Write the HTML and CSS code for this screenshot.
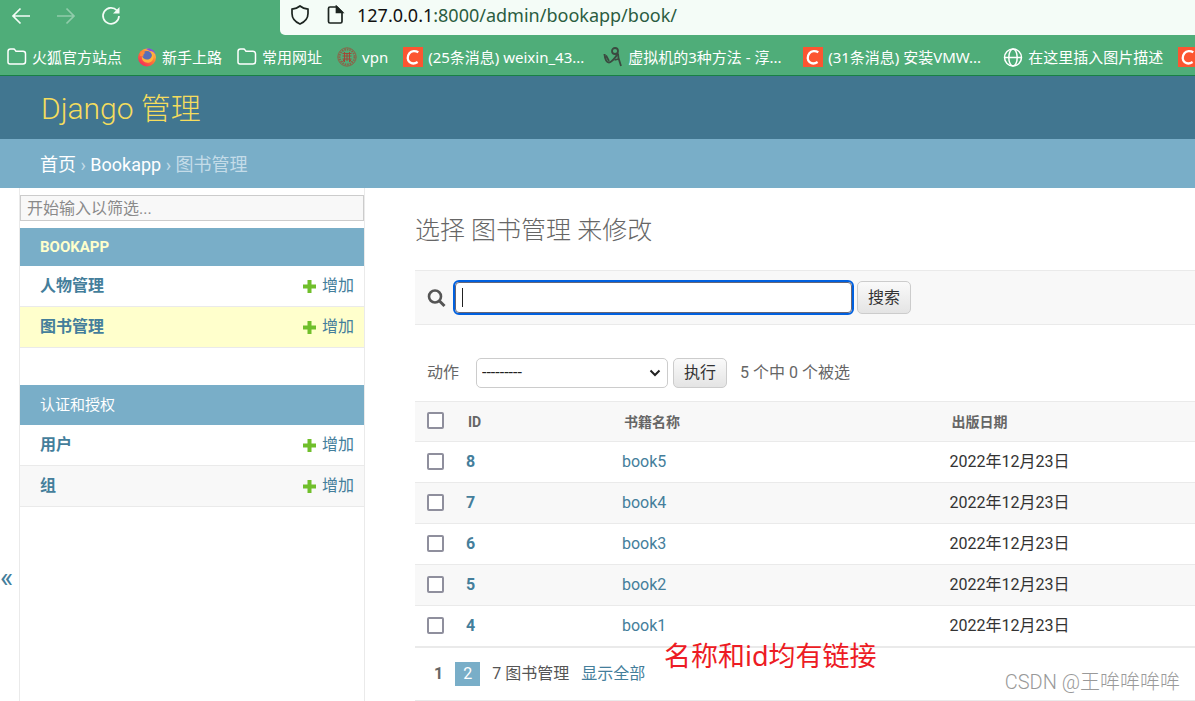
FILE: index.html
```html
<!DOCTYPE html>
<html lang="zh-CN">
<head>
<meta charset="utf-8">
<title>选择 图书管理 来修改 | Django 管理</title>
<link rel="stylesheet" href="styles.css">
</head>
<body>
<svg class="defs" width="0" height="0" aria-hidden="true">
  <symbol id="folder" viewBox="0 0 20 20"><path d="M1 15.500V4.500Q1 2 3.500 2H6.500Q7.500 2 8 2.800L9 4.300H16Q18.500 4.300 18.500 6.800V14.500Q18.500 17 16 17H3Q1 17 1 15Z" fill="none" stroke="currentColor" stroke-width="1.500"/></symbol>
  <symbol id="csdn" viewBox="0 0 20 20"><path d="M0 0H20V20H0Z" fill="#fc5531"/><path d="M15.300 5.300C12.500 3.600 8.500 3.600 6.400 6.200C3.900 9.300 4.300 13.500 6.700 15.200C8.900 16.900 12.300 16.500 14.600 15" fill="none" stroke="#fff" stroke-width="2.300"/></symbol>
  <symbol id="plus" viewBox="0 0 13 13"><path d="M4.500 0H8.500V4.500H13V8.500H8.500V13H4.500V8.500H0V4.500H4.500Z" fill="#70bf2b"/></symbol>
</svg>

<nav class="toolbar" aria-label="浏览器工具栏">
  <div class="toolbar-buttons">
    <button type="button" class="tool" aria-label="后退"><svg width="20" height="20" viewBox="0 0 20 20"><path d="M19 10H2M9.500 2.500L2 10L9.500 17.500"/></svg></button>
    <button type="button" class="tool" aria-label="前进" disabled><svg width="20" height="20" viewBox="0 0 20 20"><path d="M1 10H18M10.500 2.500L18 10L10.500 17.500"/></svg></button>
    <button type="button" class="tool" aria-label="刷新"><svg width="20" height="20" viewBox="0 0 20 20"><path d="M16 4.500A8 8 0 1 0 18 10"/><path d="M18.500 1V7.500H12Z" fill="currentColor" stroke="none"/></svg></button>
  </div>
  <div class="address">
    <svg width="20" height="20" viewBox="0 0 20 20"><path d="M10 1Q13 3.500 18 4.200V8.500Q18 15.500 10 19Q2 15.500 2 8.500V4.200Q7 3.500 10 1Z"/></svg>
    <svg width="20" height="20" viewBox="0 0 20 20"><path d="M5 2H12L17 7V16.500Q17 18 15.500 18H5Q3.500 18 3.500 16.500V3.500Q3.500 2 5 2Z"/><path d="M11.500 1.500L17.500 7.500H11.500Z" fill="currentColor"/></svg>
    <span class="url"><span class="host">127.0.0.1</span>:8000/admin/bookapp/book/</span>
  </div>
</nav>

<nav class="bookmarks" aria-label="书签">
  <a href="#"><svg width="20" height="20"><use href="#folder"/></svg><span>火狐官方站点</span></a>
  <a href="#"><svg width="20" height="20" viewBox="0 0 20 20"><defs><linearGradient id="fox" x1="1" y1="0" x2="0.200" y2="1"><stop offset="0" stop-color="#ffe14c"/><stop offset="0.500" stop-color="#ff7b35"/><stop offset="1" stop-color="#f5245d"/></linearGradient></defs><circle cx="10" cy="10.500" r="9" fill="url(#fox)"/><path d="M9 2C13 0.500 18 3 18.500 8C17 5 15.500 4 13 4Z" fill="#8a4be0"/><circle cx="10" cy="9" r="5" fill="#5a6fb8"/><path d="M5 9C6 13 12 14 14.500 10C15.500 8 15 6 13.500 4.500C18 7 17.500 14 12.500 15.500C7.500 16.500 4 13 5 9Z" fill="#ffb43d"/><path d="M3.500 5C5 4 7 4.500 8.500 6C6.500 6.500 6 8 6.500 9.500L3 9Z" fill="#ff8a3a"/></svg><span>新手上路</span></a>
  <a href="#"><svg width="20" height="20"><use href="#folder"/></svg><span>常用网址</span></a>
  <a href="#"><svg width="20" height="20" viewBox="0 0 20 20" fill="none" stroke="#8c6248"><circle cx="10" cy="10" r="9.200"/><circle cx="10" cy="10" r="7.500" stroke-width="2" stroke-dasharray="1.500 1"/><path d="M5.500 6.500H14.500M5.500 9H14.500M5.500 12H14.500M7.500 5V15M12.500 5V15M10 6V14M7.500 12L5.500 15M12.500 12L14.500 15" stroke="#a34736"/></svg><span>vpn</span></a>
  <a href="#"><svg width="20" height="20"><use href="#csdn"/></svg><span class="long">(25条消息) weixin_43...</span></a>
  <a href="#"><svg width="20" height="20" viewBox="0 0 20 20" fill="none" stroke="#3b4a40"><circle cx="12" cy="4" r="3" stroke-width="1.800"/><path d="M1.500 7C2 12 3.500 15.500 6 15.500C9 15.500 12 11 15 6.500" stroke-width="2"/><path d="M3 8.500L6 14M15 6.500L15.500 11L18 19M15.500 12L11.500 13" stroke-width="1.800"/></svg><span class="long">虚拟机的3种方法 - 淳...</span></a>
  <a href="#"><svg width="20" height="20"><use href="#csdn"/></svg><span class="long">(31条消息) 安装VMW...</span></a>
  <a href="#"><svg width="20" height="20" viewBox="0 0 20 20" fill="none" stroke="currentColor" stroke-width="1.500"><circle cx="10" cy="10.500" r="8.500"/><ellipse cx="10" cy="10.500" rx="4.200" ry="8.500"/><path d="M1.500 10.500H18.500"/></svg><span>在这里插入图片描述</span></a>
  <a href="#" aria-label="CSDN"><svg width="20" height="20"><use href="#csdn"/></svg></a>
</nav>

<header class="header"><a href="#">Django 管理</a></header>
<nav class="breadcrumbs" aria-label="路径"><a href="#">首页</a> › <a href="#">Bookapp</a> › 图书管理</nav>

<div class="main">
  <button type="button" class="toggle" aria-label="切换导航">«</button>
  <aside class="sidebar">
    <input class="filter" type="text" placeholder="开始输入以筛选..." aria-label="筛选导航项目">
    <section class="app">
      <h2 class="caption current"><a href="#">BOOKAPP</a></h2>
      <div class="model"><a class="name" href="#">人物管理</a><a class="add" href="#"><svg width="13" height="13"><use href="#plus"/></svg>增加</a></div>
      <div class="model selected"><a class="name" href="#">图书管理</a><a class="add" href="#"><svg width="13" height="13"><use href="#plus"/></svg>增加</a></div>
    </section>
    <section class="app">
      <h2 class="caption"><a href="#">认证和授权</a></h2>
      <div class="model"><a class="name" href="#">用户</a><a class="add" href="#"><svg width="13" height="13"><use href="#plus"/></svg>增加</a></div>
      <div class="model even"><a class="name" href="#">组</a><a class="add" href="#"><svg width="13" height="13"><use href="#plus"/></svg>增加</a></div>
    </section>
  </aside>

  <main class="content">
    <h1>选择 图书管理 来修改</h1>
    <form class="search">
      <label for="searchbar" aria-label="搜索"><svg width="20" height="20" viewBox="0 0 20 20" fill="none" stroke="#555"><circle cx="8" cy="8.500" r="6" stroke-width="2.600"/><path d="M12.500 13L17.500 18" stroke-width="3"/></svg></label>
      <input id="searchbar" type="text">
      <button type="submit" class="btn">搜索</button>
    </form>
    <form class="actions">
      <label for="action">动作</label>
      <span class="select-wrap">
        <select id="action"><option>---------</option><option>删除所选的 图书管理</option></select>
        <svg width="12" height="8" viewBox="0 0 12 8"><path d="M1.500 1.500L6 6L10.500 1.500" fill="none" stroke="#222" stroke-width="2"/></svg>
      </span>
      <button type="submit" class="btn">执行</button>
      <span class="counter">5 个中 0 个被选</span>
    </form>
    <table class="results">
      <thead>
        <tr><th class="col-check"><input type="checkbox" aria-label="全选"></th><th class="col-id">ID</th><th class="col-name">书籍名称</th><th>出版日期</th></tr>
      </thead>
      <tbody>
        <tr><td><input type="checkbox" aria-label="选择 8"></td><td><a class="id" href="#">8</a></td><td><a href="#">book5</a></td><td>2022年12月23日</td></tr>
        <tr><td><input type="checkbox" aria-label="选择 7"></td><td><a class="id" href="#">7</a></td><td><a href="#">book4</a></td><td>2022年12月23日</td></tr>
        <tr><td><input type="checkbox" aria-label="选择 6"></td><td><a class="id" href="#">6</a></td><td><a href="#">book3</a></td><td>2022年12月23日</td></tr>
        <tr><td><input type="checkbox" aria-label="选择 5"></td><td><a class="id" href="#">5</a></td><td><a href="#">book2</a></td><td>2022年12月23日</td></tr>
        <tr><td><input type="checkbox" aria-label="选择 4"></td><td><a class="id" href="#">4</a></td><td><a href="#">book1</a></td><td>2022年12月23日</td></tr>
      </tbody>
    </table>
    <div class="paginator">
      <span class="page">1</span><a class="page-link" href="#">2</a><span class="total">7 图书管理</span><a href="#">显示全部</a>
    </div>
    <p class="note">名称和id均有链接</p>
    <p class="watermark">CSDN @王哞哞哞哞</p>
  </main>
</div>
</body>
</html>
```
FILE: styles.css
```css
* { box-sizing: border-box; }

body {
  margin: 0;
  min-height: 100vh;
  display: flex;
  flex-direction: column;
  overflow-x: hidden;
  background: #fff;
  color: #333;
  font: 16px/20px Roboto, "Noto Sans CJK SC", sans-serif;
}

a { color: #447e9b; text-decoration: none; }
svg { flex: none; display: block; }
.defs { position: absolute; }
button, input, select { font: inherit; }

/* Browser chrome */
.toolbar {
  display: flex;
  height: 35px;
  background: #4fad79;
}
.toolbar-buttons {
  flex: none;
  display: flex;
  gap: 25px;
  width: 280px;
  padding: 6px 11px;
}
.tool {
  width: 20px;
  height: 20px;
  padding: 0;
  border: 0;
  background: none;
  color: #f3fcf6;
}
.tool svg { fill: none; stroke: currentColor; stroke-width: 1.7; }
.tool:disabled { opacity: 0.4; }
.address {
  flex: 1;
  display: flex;
  align-items: center;
  gap: 15px;
  padding: 0 10px 5px;
  border-bottom-left-radius: 5px;
  background: #f4fcf7;
  color: #1c2420;
}
.address svg { fill: none; stroke: currentColor; stroke-width: 1.7; }
.url {
  margin-left: -3px;
  color: #2b5c41;
  font: 18px/24px "Noto Sans", "Noto Sans CJK SC", sans-serif;
}
.host { color: #111; }
.bookmarks {
  display: flex;
  align-items: center;
  gap: 15px;
  height: 41px;
  padding: 4px 7px 0;
  overflow: hidden;
  border-bottom: 1px solid #188045;
  background: #4fad79;
  font: 15px/20px "Noto Sans", "Noto Sans CJK SC", sans-serif;
}
.bookmarks a {
  flex: none;
  display: flex;
  gap: 5px;
  color: #fff;
  white-space: nowrap;
}
.long { min-width: 160px; }

/* Site header */
.header {
  padding: 15px 41px 12px;
  background: #417690;
  font-size: 30px;
  line-height: 36px;
  font-weight: 300;
}
.header a { color: #f5dd5d; }
.breadcrumbs {
  padding: 14px 40px 11px;
  background: #79aec8;
  color: #c4dce8;
  font-size: 18px;
  line-height: 24px;
}
.breadcrumbs a { color: #fff; }

/* Navigation */
.main { flex: 1; display: flex; }
.toggle {
  flex: none;
  width: 19px;
  padding: 376px 0 0;
  display: flex;
  align-items: flex-start;
  border: 0;
  background: none;
  color: #447e9b;
  font-size: 28px;
  line-height: 1;
}
.sidebar {
  flex: none;
  width: 346px;
  padding-top: 7px;
  border: solid #eaeaea;
  border-width: 0 1px;
}
.filter {
  display: block;
  width: 100%;
  height: 26px;
  margin-bottom: 7px;
  padding: 0 6px;
  border: 1px solid #ccc;
  background: #f8f8f8;
}
.filter::placeholder { color: #8a8a8a; }
.app { margin-bottom: 37px; }
.caption {
  margin: 0;
  padding: 10px 20px;
  background: #79aec8;
  font-size: 15px;
  line-height: 20px;
  font-weight: 400;
}
.caption a { color: #fff; }
.current { font-weight: 700; line-height: 18px; }
.current a { color: #ffc; }
.model {
  display: flex;
  justify-content: space-between;
  padding: 10px 10px 10px 20px;
  border-bottom: 1px solid #eaeaea;
}
.selected { background: #ffc; }
.even { background: #f8f8f8; }
.name { font-weight: 700; }
.add { display: flex; align-items: center; gap: 6px; }

/* Change list */
.content {
  flex: 1;
  min-width: 0;
  padding: 28px 0 0 50px;
  position: relative;
}
h1 {
  margin: 0 0 24px;
  color: #666;
  font-size: 25px;
  line-height: 30px;
  font-weight: 300;
}
.search {
  display: flex;
  align-items: center;
  gap: 5px;
  height: 55px;
  padding: 0 12px;
  border: solid #eaeaea;
  border-width: 1px 0;
  background: #f8f8f8;
}
#searchbar {
  width: 397px;
  height: 31px;
  margin: 0 0 0 3px;
  padding: 0 6px;
  border: 1px solid #667;
  border-radius: 4px;
  outline: 2px solid #0060df;
  background: linear-gradient(#222, #222) 6px center / 1px 19px no-repeat #fff;
}
.btn {
  height: 33px;
  padding: 0 10px;
  border: 1px solid #ccc;
  border-radius: 5px;
  background: linear-gradient(#fafafa, #e4e4e4);
  color: #333;
}
.actions {
  display: flex;
  align-items: center;
  gap: 5px;
  padding: 33px 12px 13px;
  color: #666;
}
.actions .btn { height: 30px; }
.select-wrap { display: grid; align-items: center; margin-left: 12px; }
.select-wrap > * { grid-area: 1 / 1; }
.select-wrap svg { justify-self: end; margin-right: 7px; pointer-events: none; }
select {
  appearance: none;
  width: 192px;
  height: 30px;
  padding: 0 5px;
  border: 1px solid #ccc;
  border-radius: 5px;
  background: #fff;
  color: #222;
}
.counter { margin-left: 8px; }

.results {
  width: 100%;
  table-layout: fixed;
  border-collapse: separate;
  border-spacing: 0;
}
.results th, .results td {
  padding: 0 10px;
  border-bottom: 1px solid #eaeaea;
  text-align: left;
}
.results th {
  height: 41px;
  padding: 0 12px;
  border-top: 1px solid #eaeaea;
  background: #f8f8f8;
  color: #666;
  font-size: 14px;
}
.results td { height: 41px; }
.results tr > :first-child { padding: 0 12px 2px; }
.results tbody tr:nth-child(even) { background: #f8f8f8; }
.col-check { width: 41px; }
.col-id { width: 20%; }
.col-name { width: 42%; }
.id { font-weight: 700; }
input[type="checkbox"] {
  appearance: none;
  display: block;
  width: 17px;
  height: 17px;
  margin: 0;
  border: 2px solid #8f8f9d;
  border-radius: 2px;
  background: #fff;
}
.paginator {
  display: flex;
  align-items: center;
  padding: 14px 19px;
  border-top: 1px solid #eaeaea;
  border-bottom: 1px solid #eaeaea;
  color: #666;
}
.page { font-weight: 700; }
.page-link {
  margin: 0 12px;
  padding: 2px 8px;
  background: #79aec8;
  color: #fff;
}
.total { margin-right: 12px; color: #555; }

/* Captions lying over the page */
.note, .watermark { position: absolute; margin: 0; white-space: nowrap; }
.note {
  left: 299px;
  top: 452px;
  color: #ed1c24;
  font: 27px/32px "Noto Sans", "Noto Sans CJK SC", sans-serif;
}
.watermark {
  right: 15px;
  bottom: 6px;
  color: #999;
  font: 300 20px/26px Roboto, "Noto Sans CJK SC", sans-serif;
}
```
